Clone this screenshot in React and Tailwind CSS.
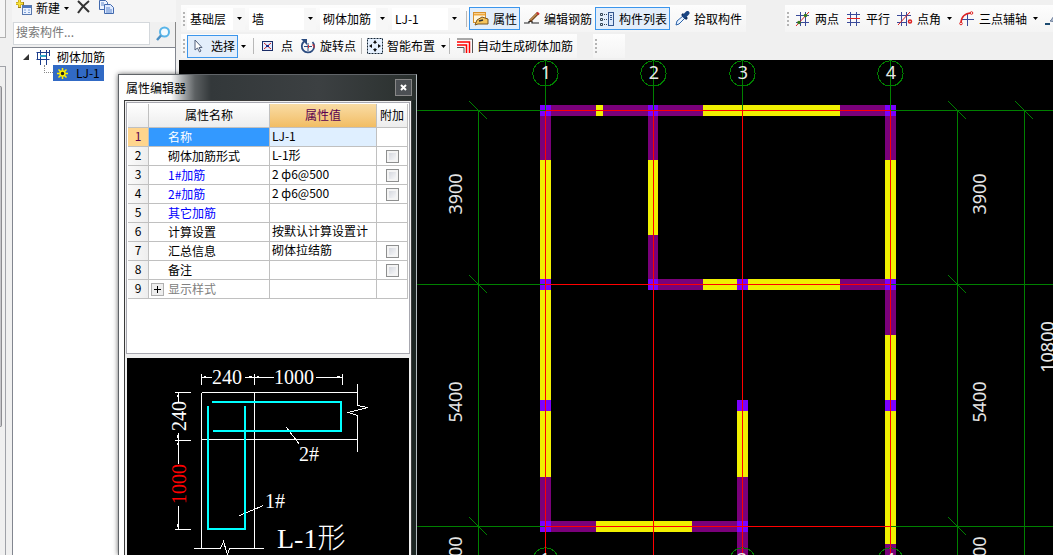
import { useState } from "react";
import clsx from "clsx";

const WALL = "#7a007a";
const WINDOW = "#f0f000";
const COLUMN = "#7b00ff";
const GRID = "#008000";

// [x1, x2, colour] runs along a horizontal wall, [y1, y2, colour] along a vertical one
const rows = [
  { y: 105, runs: [[540, 551, COLUMN], [551, 596, WALL], [596, 603, WINDOW], [603, 648, WALL], [648, 658, COLUMN], [658, 703, WALL], [703, 840, WINDOW], [840, 885, WALL], [885, 896, COLUMN]] },
  { y: 279, runs: [[648, 658, COLUMN], [658, 703, WALL], [703, 737, WINDOW], [737, 748, COLUMN], [748, 840, WINDOW], [840, 885, WALL], [885, 896, COLUMN]] },
  { y: 521, runs: [[540, 551, COLUMN], [551, 596, WALL], [596, 692, WINDOW], [692, 737, WALL], [737, 748, COLUMN]] },
];
const cols = [
  { x: 540, w: 11, runs: [[116, 160, WALL], [160, 279, WINDOW], [279, 290, COLUMN], [290, 400, WINDOW], [400, 411, COLUMN], [411, 477, WINDOW], [477, 521, WALL]] },
  { x: 648, w: 10, runs: [[116, 160, WALL], [160, 235, WINDOW], [235, 279, WALL]] },
  { x: 737, w: 11, runs: [[400, 411, COLUMN], [411, 477, WINDOW], [477, 521, WALL], [532, 700, WALL]] },
  { x: 885, w: 11, runs: [[116, 160, WALL], [160, 279, WINDOW], [290, 335, WALL], [335, 400, WINDOW], [400, 411, COLUMN], [411, 544, WINDOW], [544, 700, WALL]] },
];
const axesX = [[545, "1"], [653, "2"], [742, "3"], [890, "4"]];
const axesY = [110, 284, 526];
const ticks = [[478, 110], [478, 284], [478, 526], [957, 110], [957, 284], [957, 526], [1024, 110]];
const dims = [
  [462, 194, "3900"], [462, 402, "5400"], [462, 557, "1500"],
  [986, 194, "3900"], [986, 402, "5400"], [986, 557, "1500"],
  [1054, 347, "10800"],
];

function Plan() {
  return (
    <svg className="block h-full w-full bg-black" shapeRendering="crispEdges" aria-label="平面图">
      <g transform="translate(-179 -60)">
        {rows.map((r) => r.runs.map(([a, b, c]) => <rect key={`${r.y}-${a}`} x={a} y={r.y} width={b - a} height={11} fill={c} />))}
        {cols.map((r) => r.runs.map(([a, b, c]) => <rect key={`${r.x}-${a}`} x={r.x} y={a} width={r.w} height={b - a} fill={c} />))}
        <g transform="translate(.5 .5)" fill="none" stroke={GRID}>
          {axesX.map(([x]) => <path key={x} d={`M${x} 60V110`} />)}
          {axesX.map(([x]) => <circle key={x} cx={x} cy={73} r={12.6} />)}
          {axesX.filter(([x]) => x !== 653).map(([x]) => <circle key={x} cx={x} cy={560} r={12.6} />)}
          {axesY.map((y) => <path key={y} d={`M179 ${y}H545M890 ${y}H4000`} />)}
          <path d="M478 110V2000M957 110V2000M1024 110V2000" />
          {ticks.map(([x, y]) => <path key={`${x}-${y}`} d={`M${x - 9} ${y - 9}l18 18`} />)}
          <g stroke="#ff0000">
            {axesY.map((y) => <path key={y} d={`M545 ${y}H890`} />)}
            {axesX.map(([x]) => <path key={x} d={`M${x} 110V2000`} />)}
          </g>
        </g>
        <g fill="#e6e6e6" fontFamily="'Noto Sans', sans-serif" fontSize="18" textAnchor="middle">
          {axesX.map(([x, n]) => <text key={n} x={x + 1} y={79}>{n}</text>)}
          {axesX.filter(([x]) => x !== 653).map(([x, n]) => <text key={n} x={x} y={566}>{n}</text>)}
          {dims.map(([x, y, t]) => <text key={`${x}-${y}`} transform={`translate(${x} ${y}) rotate(-90)`}>{t}</text>)}
        </g>
      </g>
    </svg>
  );
}

function Preview() {
  return (
    <svg className="block min-h-0 w-full flex-1 bg-black" aria-label="L-1形">
      <g transform="translate(.5 .5)" fill="none" stroke="#fff" shapeRendering="crispEdges">
        <path d="M74 15v11M127 15v11M215 15v11M74 19h10M117 19h29M188 19h27" />
        <path d="M47 34h16M47 82h16M47 171h16M51 34v9M51 74v31M51 147v24" />
        <path d="M74 34H230M74 81H230M74 34V190M127 34V190M230 25v22l10 2-19 5 9 3v36" />
        <path d="M66 190h27l3-7 4 13 2-6h34" />
        <path d="M159 69l13 17M112 157l24-10" />
        <path d="M75 19l4-1M126 19l-4-1M128 19l4-1M214 19l-4-1M51 35l-1 4M51 81l-1-4M51 83l-1 4M51 170l-1-4" />
      </g>
      <g fill="none" stroke="#00ffff" strokeWidth="2" shapeRendering="crispEdges">
        <path d="M85 44H214V73H86" />
        <path d="M81 48V171H118V48" />
      </g>
      <g fill="#fff" fontFamily="'Liberation Serif', 'Noto Sans CJK SC', serif" fontSize="20">
        <text x="85" y="26">240</text>
        <text x="147" y="26">1000</text>
        <text transform="translate(59 73) rotate(-90)">240</text>
        <text transform="translate(59 146) rotate(-90)" fill="#ff0000">1000</text>
        <text x="172" y="103">2#</text>
        <text x="138" y="150">1#</text>
        <text x="150" y="190" fontSize="28" fontWeight="300">L-1形</text>
      </g>
    </svg>
  );
}

function Icon({ children }) {
  return <svg width="16" height="16" viewBox="0 0 16 16" fill="none" className="shrink-0">{children}</svg>;
}

const Arrow = () => <svg width="5" height="3" viewBox="0 0 5 3"><path d="M0 0h5L2.500 3z" fill="#000" /></svg>;

const icons = {
  cursor: <Icon><path d="M4 2v10l2.500-2 2 4 1.500-1-2-3.500h3z" fill="#fff" stroke="#52617c" /></Icon>,
  point: <Icon><rect x="1.500" y="3.500" width="10" height="9" stroke="#1a2c66" fill="#e4ecff" /><path d="M3 5l7 6M10 5l-7 6" stroke="#c22" /><path d="M5 7h3v2H5z" fill="#1a2c88" /></Icon>,
  rotate: <Icon><path d="M4 3.500A6.200 6.200 0 1 0 12.500 4" stroke="#2c4c80" strokeWidth="1.800" /><path d="M1 1h6v6z" fill="#2c4c80" /><path d="M8 5v8M4 8.500h8" stroke="#2c4c80" /><path d="M8.500 7v3M12 7h2v3" stroke="#d33" /></Icon>,
  smart: <Icon><rect x=".5" y=".5" width="15" height="15" fill="#e6f1ff" stroke="#123" strokeDasharray="2 1" /><path d="M8 2l2 3H6zM8 14l2-3H6zM2 8l3-2v4zM14 8l-3-2v4z" fill="#111" /><path d="M8 5v1M8 10v1" stroke="#111" /></Icon>,
  auto: <Icon><path d="M0 1h15.500v14" stroke="#555" /><path d="M0 4h12.500v11" stroke="#f00" strokeWidth="1.500" /><path d="M0 7h9.500v8" stroke="#f00" strokeWidth="1.500" /><path d="M0 9.500h7V15" stroke="#555" /></Icon>,
  property: <Icon><rect x=".5" y="1.500" width="12" height="10" fill="#fff6df" stroke="#d9922b" /><path d="M1 3.500h11" stroke="#f0a93f" strokeWidth="2" /><path d="M4 9l5-3 6 2v5H5l-3 1z" fill="#f6c45b" stroke="#7b5520" /><path d="M6 10l4-1" stroke="#333" strokeWidth="1.500" /></Icon>,
  edit: <Icon><path d="M0 12h5v-1.500h3V12h7" stroke="#222" strokeWidth="1.200" /><path d="M6 10l8-8" stroke="#7a4a22" strokeWidth="3" /><path d="M6.500 9l7-7" stroke="#f3c073" /><path d="M13 1.500l2 2" stroke="#c33" strokeWidth="2" /></Icon>,
  list: <Icon><path d="M1.500 2.500h2v2h-2zM1.500 7.500h2v2h-2zM1.500 12.500h2v2h-2z" stroke="#345" /><path d="M5 3.500h3M5 8.500h3M5 13.500h3" stroke="#345" strokeDasharray="1 1" /><rect x="9.500" y="1.500" width="5" height="13" fill="#dbe8fa" stroke="#35578f" /><path d="M11 4.500h2M11 6.500h2M11 8.500h2" stroke="#35578f" /></Icon>,
  pick: <Icon><path d="M2 14l1-4 6-5 2 2-6 6z" fill="#e8f3ff" stroke="#2b62a8" /><path d="M8 3l5 5" stroke="#12305e" strokeWidth="2.500" /><path d="M10.500 5l3-3" stroke="#1b4684" strokeWidth="4" strokeLinecap="round" /></Icon>,
  twoPoint: <Icon><path d="M5.500 1v14M10.500 1v14M1 4.500h13M1 11.500h13" stroke="#3a4a9a" /><path d="M1 15L14 1" stroke="#d22" /><circle cx="10.500" cy="4.500" r="1.800" fill="#3a7a1c" /><circle cx="4" cy="11.500" r="1.800" fill="#3a7a1c" /></Icon>,
  parallel: <Icon><path d="M4.500 1v14M10.500 1v14M1 3.500h13M1 11.500h13" stroke="#3a4a9a" /><path d="M1 7.500h13" stroke="#d22" /></Icon>,
  angle: <Icon><path d="M4.500 1v14M9.500 1v14M0 4.500h14M0 11.500h9" stroke="#3a4a9a" /><path d="M1 14L13 1" stroke="#d22" /><circle cx="13" cy="10.500" r="1.500" stroke="#d22" strokeWidth="1.500" /></Icon>,
  arc: <Icon><path d="M8.500 3v12M2 8.500h13" stroke="#3a4a9a" /><path d="M2 12C2 6 6 2 12 2" stroke="#d22" strokeWidth="1.500" /><circle cx="2" cy="12.500" r="1.300" stroke="#d22" fill="#fff" /><circle cx="12.500" cy="2" r="1.300" stroke="#d22" fill="#fff" /></Icon>,
};

function Grip() {
  return <span className="mx-[2px] h-[14px] w-[2px] shrink-0 bg-[repeating-linear-gradient(#b4b4b4_0_2px,transparent_2px_4px)]" />;
}

function Separator({ className }) {
  return <span className={clsx("h-4 w-px shrink-0 bg-[#b8b8b8]", className)} />;
}

function Tool({ icon, label, on }) {
  return (
    <button className={clsx("flex h-[23px] shrink-0 items-center gap-1 border pr-[2px] pl-[3px] whitespace-nowrap", on ? "border-[#3c96ec] bg-[#e3eefb]" : "border-transparent")}>
      {icons[icon]}
      {label}
    </button>
  );
}

function Drop({ label }) {
  return <button aria-label={label} className="flex h-5 w-[11px] shrink-0 items-center justify-center"><Arrow /></button>;
}

function Combo({ label, value, className }) {
  return (
    <div className={clsx("relative mr-1 flex h-[22px] shrink-0 items-center bg-white", className)}>
      <select aria-label={label} className="h-full w-full appearance-none bg-transparent pl-[3px] outline-none">
        <option>{value}</option>
      </select>
      <span className="pointer-events-none absolute inset-y-0 right-0 flex w-3 items-center justify-center bg-[#f7f7f7]"><Arrow /></span>
    </div>
  );
}

function Toolbars() {
  const group = "flex shrink-0 items-center bg-linear-to-b from-[#fdfdfd] to-[#f4f4f4]";
  return (
    <div className="flex h-[60px] shrink-0 flex-col overflow-hidden pl-[2px]">
      <div className="mt-[5px] flex h-[27px]">
        <div className={clsx(group, "pr-px")}>
          <Grip />
          <Combo label="楼层" value="基础层" className="w-[58px]" />
          <Combo label="构件类型" value="墙" className="w-[67px]" />
          <Combo label="构件" value="砌体加筋" className="w-[68px]" />
          <Combo label="构件名称" value="LJ-1" className="w-[68px]" />
          <Separator className="mx-[2px]" />
          <Tool icon="property" label="属性" on />
          <Tool icon="edit" label="编辑钢筋" />
          <Tool icon="list" label="构件列表" on />
          <Tool icon="pick" label="拾取构件" />
        </div>
        <div className={clsx(group, "ml-[39px] flex-1")}>
          <Grip />
          <Tool icon="twoPoint" label="两点" />
          <Tool icon="parallel" label="平行" />
          <Tool icon="angle" label="点角" />
          <Drop label="点角选项" />
          <Tool icon="arc" label="三点辅轴" />
          <Drop label="三点辅轴选项" />
          <span className="ml-1 flex">
            <Icon><path d="M5 10c2-1 3-5 6-7v8z" fill="#a9b7cc" stroke="#6b7c99" /><path d="M0 13h5" stroke="#1b4a70" strokeWidth="2" /></Icon>
          </span>
        </div>
      </div>
      <div className="mt-[2px] flex h-6">
        <div className={clsx(group, "pr-px")}>
          <Grip />
          <Tool icon="cursor" label="选择" on />
          <Drop label="选择选项" />
          <Separator className="mr-[3px] ml-1" />
          <Tool icon="point" label="点" />
          <Tool icon="rotate" label="旋转点" />
          <Separator className="mr-px ml-[2px]" />
          <Tool icon="smart" label="智能布置" />
          <Drop label="智能布置选项" />
          <Separator className="mr-[3px]" />
          <Tool icon="auto" label="自动生成砌体加筋" />
        </div>
        <div className={clsx(group, "ml-4 w-8")}><Grip /></div>
      </div>
    </div>
  );
}

function Sidebar() {
  return (
    <aside className="flex w-[164px] shrink-0 flex-col">
      <div className="flex h-[22px] items-start bg-[#f5f5f5] pl-1">
        <button className="flex h-4 items-center gap-1">
          <Icon>
            <rect x="6.500" y="5.500" width="9" height="9" fill="#e8f1ff" stroke="#5878ad" />
            <path d="M7 7h8" stroke="#4a77c0" strokeWidth="2" />
            <path d="M8 10h2M12 10h2M8 12.500h2M12 12.500h2" stroke="#7da0d8" />
            <path d="M3.500 0v8M0 3.500h8" stroke="#9b7a10" strokeWidth="3" />
            <path d="M3.500 0v7M0 3.500h7" stroke="#f8e23a" strokeWidth="2" />
          </Icon>
          新建
          <Arrow />
        </button>
        <button aria-label="删除" className="ml-[7px]">
          <Icon><path d="M2 1l11 11M13 1C9 4 5 8 2 13" stroke="#333" strokeWidth="2" /></Icon>
        </button>
        <button aria-label="复制" className="ml-[6px]">
          <Icon>
            <path d="M1.500 .5h6l2 2v7h-8z" fill="#eef4ff" stroke="#4169ad" />
            <path d="M6.500 4.500h6l3 3v6h-9z" fill="#dfeaff" stroke="#4169ad" />
            <path d="M3 3h3M3 5h3M8 8h4M8 10h6M8 12h6" stroke="#5f88cc" />
          </Icon>
        </button>
      </div>
      <div className="flex h-[25px] shrink-0 border-r border-[#888] bg-[#f0f0f0] pb-[2px] pl-px">
        <input aria-label="搜索构件" placeholder="搜索构件..." className="w-[137px] border border-[#d4d8dc] bg-white px-[2px] pb-1 placeholder:text-[#777] focus:outline-none" />
        <button aria-label="搜索" className="flex flex-1 items-center justify-center">
          <Icon><circle cx="9.500" cy="6" r="4.500" stroke="#58b4e8" strokeWidth="2" fill="#f4fbff" /><path d="M6 9.500L2 14" stroke="#4a8fc4" strokeWidth="2.500" /></Icon>
        </button>
      </div>
      <div className="flex-1 border border-b-0 border-[#82868f] bg-white pt-px">
        <div className="flex h-4 items-center pl-[10px]">
          <svg width="6" height="6"><path d="M6 0v6H0z" fill="#333" /></svg>
          <span className="ml-[6px] flex"><Icon>
            <path d="M1.500 3.500h13M1.500 10.500h13M5.500 1v15M11.500 1v15M2.500 3v7M14.500 1v6" stroke="#1c3d8c" />
            <path d="M5 7h6" stroke="#2fa6c8" strokeWidth="2" />
          </Icon></span>
          <span className="ml-[6px]">砌体加筋</span>
        </div>
        <div className="flex h-4 pl-[31px]">
          <span className="h-2 w-[9px] border-b border-l border-dotted border-[#888]" />
          <span className="flex items-center bg-[#316ac5] pr-1 pl-1">
            <svg width="11" height="11" viewBox="0 0 11 11" fill="none">
              <path d="M5.500 0v11M0 5.500h11M1.500 1.500l8 8M9.500 1.500l-8 8" stroke="#ffee00" strokeWidth="1.500" />
              <circle cx="5.500" cy="5.500" r="2.500" fill="#222" stroke="#ffee00" strokeWidth="1.500" />
            </svg>
            <span className="ml-2">LJ-1</span>
          </span>
        </div>
      </div>
    </aside>
  );
}

const initial = [
  { name: "名称", value: "LJ-1" },
  { name: "砌体加筋形式", value: "L-1形", extra: false },
  { name: "1#加筋", value: "2 ф6@500", extra: false, blue: true },
  { name: "2#加筋", value: "2 ф6@500", extra: false, blue: true },
  { name: "其它加筋", value: "", blue: true },
  { name: "计算设置", value: "按默认计算设置计" },
  { name: "汇总信息", value: "砌体拉结筋", extra: false },
  { name: "备注", value: "", extra: false },
  { name: "显示样式", value: "", group: true },
];

function PropertyTable() {
  const [props, setProps] = useState(initial);
  const toggle = (i) => setProps((p) => p.map((r, k) => (k === i ? { ...r, extra: !r.extra } : r)));
  const cell = "overflow-hidden border-r border-b border-[#c0c0c0] p-0 whitespace-nowrap";
  const raised = "pb-[2px]";
  return (
    <table className="w-full table-fixed border-separate border-spacing-0 leading-4">
      <colgroup>
        <col className="w-[21px]" />
        <col />
        <col className="w-[107px]" />
        <col className="w-[31px]" />
      </colgroup>
      <thead>
        <tr className="h-6 bg-linear-to-b from-white to-[#ececec]">
          <th className={cell} />
          <th className={clsx(cell, raised, "font-normal")}>属性名称</th>
          <th className={clsx(cell, raised, "bg-linear-to-b from-[#f9dca4] to-[#f2bd63] font-normal text-[#5a0050]")}>属性值</th>
          <th className={clsx(cell, raised, "font-normal")}>附加</th>
        </tr>
      </thead>
      <tbody>
        {props.map((r, i) => (
          <tr key={r.name} className="h-[19px]">
            <td className={clsx(cell, raised, "text-center", i === 0 ? "bg-[#ffd58d] text-[#5a0050]" : "bg-linear-to-r from-[#fafafa] to-[#eeeeee]")}>{i + 1}</td>
            <td className={clsx(cell, i === 0 && "bg-[#3399ff] text-white", r.blue && "text-[#0000ff]", r.group && "text-[#808080]")}>
              <div className={clsx("flex items-center", !r.group && "pl-[19px]")}>
                {r.group && <button aria-label="展开" className="mr-1 ml-[2px] flex h-[13px] w-[13px] items-center justify-center border border-[#b0b0b0] bg-[#eee]"><svg width="7" height="7"><path d="M0 3h7v1H0zM3 0h1v7H3z" fill="#000" /></svg></button>}
                {r.name}
              </div>
            </td>
            <td className={clsx(cell, raised, "pl-[2px]", i === 0 && "bg-[#dfefff]")}>{r.value}</td>
            <td className={cell}>
              {r.extra !== undefined && (
                <input type="checkbox" aria-label={`附加 ${r.name}`} checked={r.extra} onChange={() => toggle(i)}
                  className="mx-auto block h-[13px] w-[13px] appearance-none border border-[#8e8f8f] bg-linear-to-br from-[#cdd0d8] to-white ring-2 ring-[#f4f4f4] ring-inset checked:from-[#3399ff]" />
              )}
            </td>
          </tr>
        ))}
      </tbody>
    </table>
  );
}

function PropertyEditor() {
  return (
    <section className="absolute top-[74px] bottom-0 left-[118px] flex w-[299px] flex-col border border-b-0 border-[#606468] border-r-[#b4bcc0] bg-white shadow-[0_0_5px_rgba(0,0,0,0.6)]">
      <header className="flex h-[25px] shrink-0 items-center justify-between bg-[linear-gradient(to_right,#fff_0,#fafafa_52px,#a8abad_64px,#5c6062_76px,#33383a_92px,#3c4042_200px,#2a302e_100%)] pr-1 pl-[7px]">
        <h2>属性编辑器</h2>
        <button aria-label="关闭" className="flex h-[17px] w-[17px] items-center justify-center border border-[#888] bg-[#4c5054]">
          <svg width="7" height="7" viewBox="0 0 7 7"><path d="M1 1l5 5M6 1L1 6" stroke="#fff" strokeWidth="2" /></svg>
        </button>
      </header>
      <div className="flex min-h-0 flex-1 flex-col border-r-4 border-[#1c2623] pl-[5px]">
        <div className="flex min-h-0 flex-1 flex-col border border-b-0 border-[#3a3a3a] bg-[#f0f0f0] px-px pt-px">
          <div className="h-[252px] shrink-0 border border-[#a8a8b0] bg-white p-px">
            <PropertyTable />
          </div>
          <div className="flex min-h-0 flex-1 flex-col px-px pt-1">
            <Preview />
          </div>
        </div>
      </div>
    </section>
  );
}

export default function App() {
  return (
    <div className="relative flex h-screen overflow-hidden bg-[#f0f0f0] font-['Noto_Sans_CJK_SC','Liberation_Sans',sans-serif] text-xs text-black">
      <div className="flex w-3 shrink-0 flex-col">
        <div className="h-[38px] w-[6px] border-r border-b border-[#b0b0b0] bg-[#f5f5f5]" />
        <div className="mt-[28px] mr-[6px] flex-1 border-t border-r border-[#a0a2a8] pt-[19px] pr-[3px]">
          <div className="h-[341px] rounded-r-xs border border-l-0 border-[#8c8c90] bg-[#c6c6ca]" />
        </div>
      </div>
      <Sidebar />
      <main className="ml-[3px] flex min-w-0 flex-1 flex-col">
        <Toolbars />
        <div className="min-h-0 flex-1"><Plan /></div>
      </main>
      <PropertyEditor />
    </div>
  );
}
